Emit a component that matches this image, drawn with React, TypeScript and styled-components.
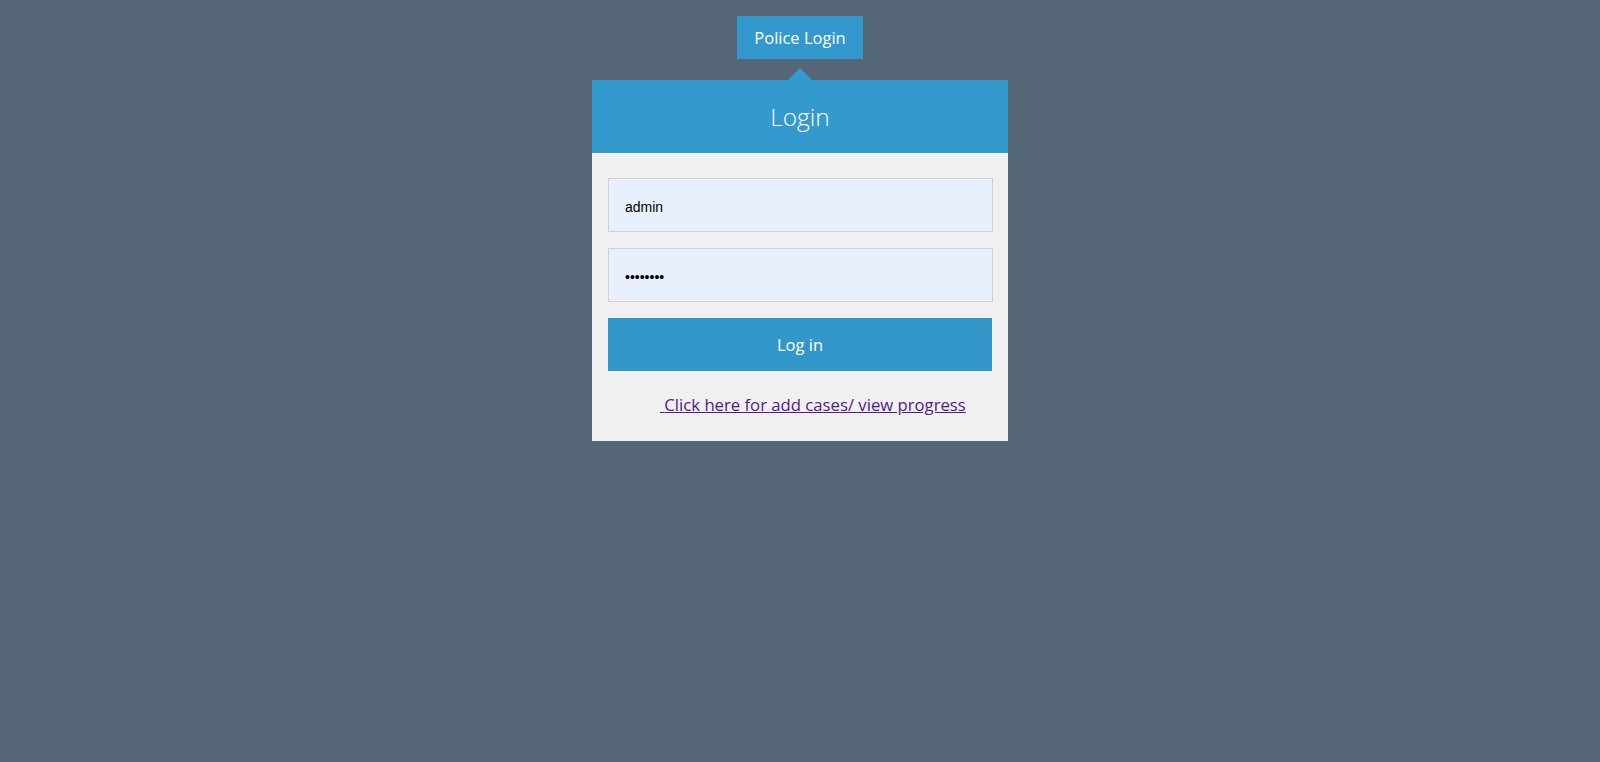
import styled, { createGlobalStyle } from 'styled-components';

const GlobalStyle = createGlobalStyle`
  html, body {
    margin: 0;
    padding: 0;
    background: #556677;
  }

  * {
    box-sizing: border-box;
  }
`;

export default function App() {
  return (
    <>
      <GlobalStyle />
      <Page>
        <TopButton type="button">Police Login</TopButton>

        <Card>
          <CardHeader>Login</CardHeader>

          <Form onSubmit={(e) => e.preventDefault()}>
            <Input type="text" defaultValue="admin" readOnly />
            <Input type="password" defaultValue="password" readOnly />
            <SubmitButton type="submit">Log in</SubmitButton>

            <Footer>
              <CasesLink href="#">{'\u00a0'}Click here for add cases/ view progress</CasesLink>
            </Footer>
          </Form>
        </Card>
      </Page>
    </>
  );
}

const Page = styled.div`
  min-height: 100vh;
  display: flex;
  flex-direction: column;
  align-items: center;
  padding-top: 16px;
  font-family: 'Open Sans', 'Liberation Sans', sans-serif;
`;

const TopButton = styled.button`
  height: 43px;
  padding: 0 17px;
  border: 0;
  background: #3399cc;
  color: #fff;
  font-family: 'Open Sans', 'Liberation Sans', sans-serif;
  font-size: 16.5px;
  cursor: pointer;
`;

const Card = styled.div`
  width: 416px;
  margin-top: 21px;
  background: #f0f0f0;
`;

const CardHeader = styled.h2`
  position: relative;
  margin: 0;
  height: 74px;
  display: flex;
  align-items: center;
  justify-content: center;
  background: #3499cc;
  border-bottom: 1px solid #f7f7f7;
  color: #fff;
  font-size: 24.5px;
  font-weight: 300;

  &::before {
    content: '';
    position: absolute;
    top: -12px;
    left: 50%;
    margin-left: -12px;
    border-left: 12px solid transparent;
    border-right: 12px solid transparent;
    border-bottom: 12px solid #3499cc;
  }
`;

const Form = styled.form`
  display: flex;
  flex-direction: column;
  gap: 16px;
  padding: 24px 16px 25px;
`;

const Input = styled.input`
  width: calc(100% + 1px);
  height: 54px;
  padding: 3px 16px 0;
  border: 1px solid #cfd3d8;
  background: #e8f0fe;
  color: #000;
  font-family: 'Liberation Sans', Arial, sans-serif;
  font-size: 14px;
  outline: none;
`;

const SubmitButton = styled.button`
  width: 100%;
  height: 53px;
  border: 0;
  background: #3296c9;
  color: #fff;
  font-family: 'Open Sans', 'Liberation Sans', sans-serif;
  font-size: 16.5px;
  cursor: pointer;
`;

const Footer = styled.p`
  margin: 7px 0 0;
  padding-left: 52px;
  line-height: 22px;
`;

const CasesLink = styled.a`
  color: #551a8b;
  font-size: 16.7px;
  text-decoration: underline;
`;
